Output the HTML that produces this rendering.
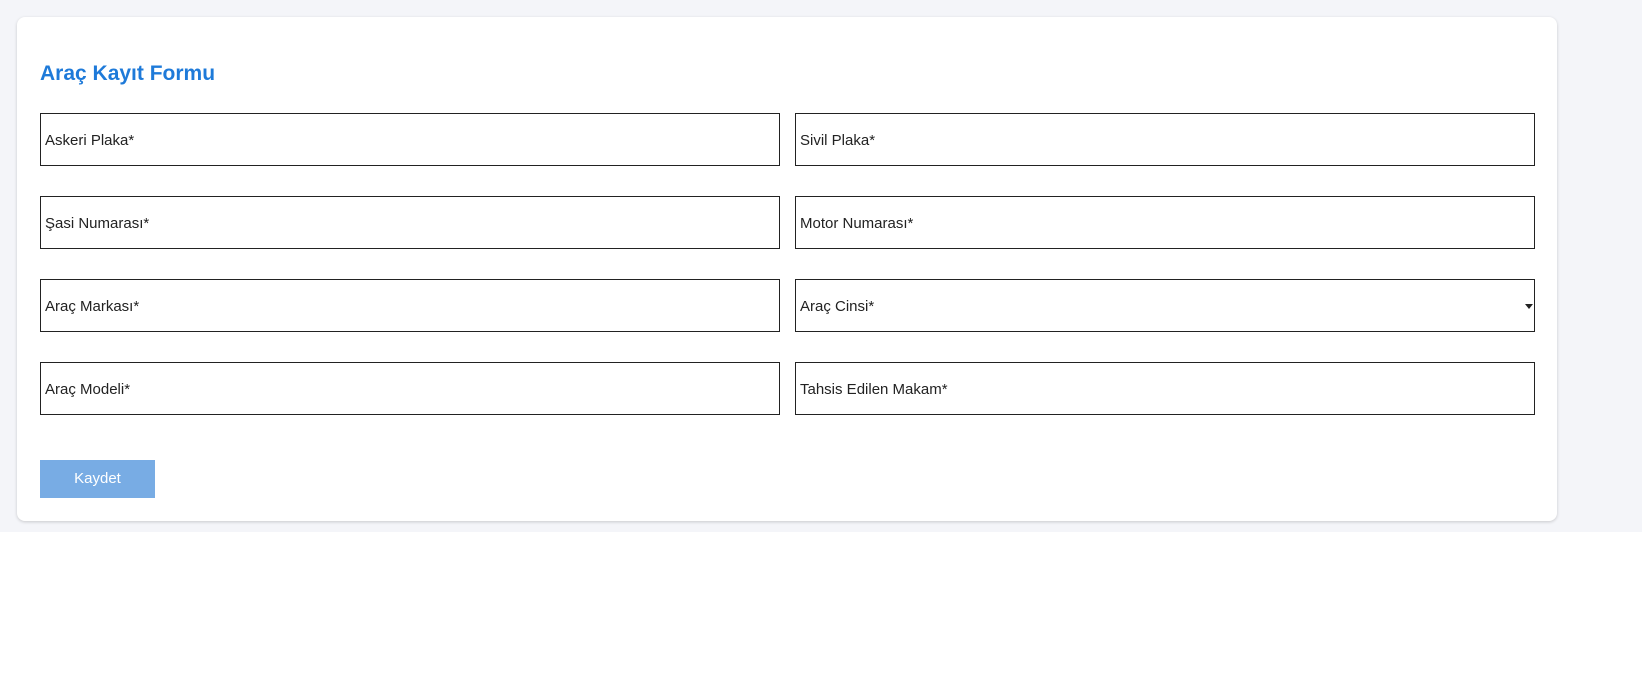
<!DOCTYPE html>
<html><head><meta charset="utf-8"><style>
html,body{margin:0;padding:0;width:1642px;height:684px;background:#fff;overflow:hidden;font-family:"Segoe UI","Liberation Sans",sans-serif}
.bg{position:absolute;left:0;top:0;width:1642px;height:532px;background:#f4f5f9}
.card{position:absolute;left:17px;top:17px;width:1540px;height:504px;background:#fff;border-radius:8px;box-shadow:0 1px 3px rgba(0,0,0,.18)}
h1{position:absolute;left:40px;top:62px;margin:0;font-size:21px;font-weight:bold;color:#1e7ad9;font-family:"Liberation Sans",sans-serif}
.f{position:absolute;width:738px;height:51px;border:1px solid #222;box-sizing:content-box;background:#fff}
.f span{position:absolute;left:4px;top:18px;font-size:15px;color:#222;font-family:"Liberation Sans",sans-serif}
.arr{position:absolute;right:1px;top:24px;width:0;height:0;border-left:4px solid transparent;border-right:4px solid transparent;border-top:5px solid #222}
.btn{position:absolute;left:40px;top:460px;width:115px;height:38px;background:#78ace4;color:#fff;font-size:15px;text-align:center;line-height:38px;font-family:"Liberation Sans",sans-serif}
</style></head><body>
<div class="bg"></div>
<div class="card"></div>
<h1>Araç Kayıt Formu</h1>
<div class="f" style="left:40px;top:113px"><span>Askeri Plaka*</span></div>
<div class="f" style="left:795px;top:113px"><span>Sivil Plaka*</span></div>
<div class="f" style="left:40px;top:196px"><span>Şasi Numarası*</span></div>
<div class="f" style="left:795px;top:196px"><span>Motor Numarası*</span></div>
<div class="f" style="left:40px;top:279px"><span>Araç Markası*</span></div>
<div class="f" style="left:795px;top:279px"><span>Araç Cinsi*</span><div class="arr"></div></div>
<div class="f" style="left:40px;top:362px"><span>Araç Modeli*</span></div>
<div class="f" style="left:795px;top:362px"><span>Tahsis Edilen Makam*</span></div>
<div class="btn">Kaydet</div>
</body></html>
